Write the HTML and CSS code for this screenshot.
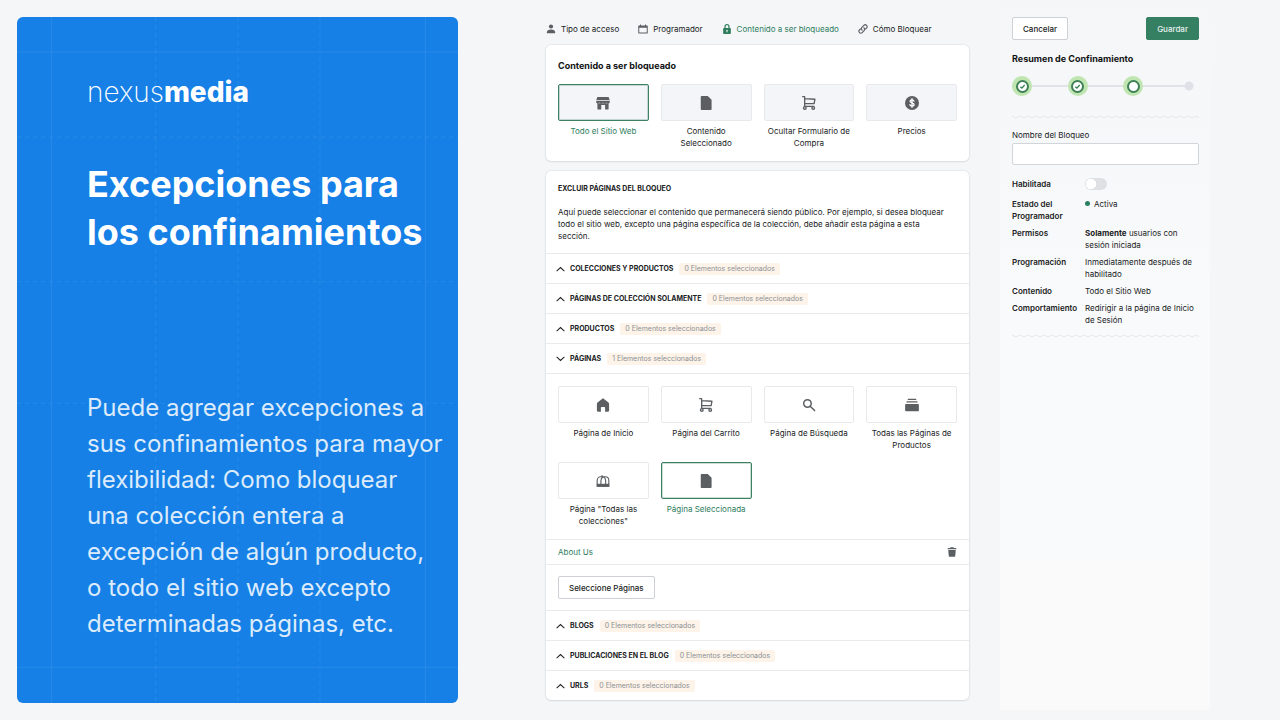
FILE: index.html
```html
<!DOCTYPE html>
<html lang="es">
<head>
<meta charset="utf-8">
<meta name="viewport" content="width=device-width, initial-scale=1">
<title>Excepciones para los confinamientos</title>
<link rel="stylesheet" href="styles.css">
</head>
<body>
<svg class="defs" aria-hidden="true">
  <defs>
    <symbol id="i-person" viewBox="0 0 20 20"><circle cx="10" cy="5" r="4.2"/><path d="M1.500 17.500C1.500 13 5 11 10 11s8.500 2 8.500 6.500c0 .6-.4 1-1 1h-15c-.6 0-1-.4-1-1z"/></symbol>
    <symbol id="i-calendar" viewBox="0 0 20 20"><path fill-rule="evenodd" d="M4 1h2v2h8V1h2v2h2.500c.6 0 1 .4 1 1v14c0 .6-.4 1-1 1h-17c-.6 0-1-.4-1-1V4c0-.6.4-1 1-1H4V1zM2.500 7.500V17h15V7.500h-15z"/></symbol>
    <symbol id="i-lock" viewBox="0 0 20 20"><path fill-rule="evenodd" d="M10 0C7 0 4.800 2.300 4.800 5v3H4c-1 0-1.700.7-1.700 1.700v8.600c0 1 .7 1.700 1.700 1.700h12c1 0 1.700-.7 1.700-1.700V9.700c0-1-.7-1.700-1.700-1.700h-.8V5c0-2.700-2.200-5-5.200-5zm-2.700 8V5c0-1.500 1.100-2.600 2.700-2.600s2.700 1.100 2.700 2.600v3H7.300zM10 11.300a1.700 1.700 0 0 1 1 3v2.400H9v-2.400a1.700 1.700 0 0 1 1-3z"/></symbol>
    <symbol id="i-link" viewBox="0 0 20 20"><g fill="none" stroke="currentColor" stroke-width="2.200" stroke-linecap="round"><path d="M8.500 12.500c-2.200-1.600-2.300-4.200-.8-5.700l4-4c1.600-1.600 4-1.500 5.400-.1s1.500 3.700 0 5.300l-2 2"/><path d="M11.500 7.500c2.200 1.600 2.300 4.200.8 5.700l-4 4c-1.600 1.600-4 1.500-5.400.1s-1.500-3.700 0-5.300l2-2"/></g></symbol>
    <symbol id="i-store" viewBox="0 0 20 20"><path d="M2.500 1.500h15c.4 0 .7.2.8.600L19.700 6H.3l1.400-3.900c.1-.4.400-.6.8-.6z"/><path d="M.3 7h19.400v1.500c0 1.300-.9 2.200-2.200 2.200-1 0-1.900-.5-2.500-1.300-.6.800-1.500 1.300-2.500 1.300s-1.900-.5-2.500-1.300c-.6.800-1.500 1.300-2.500 1.300S5.600 10.200 5 9.400c-.6.800-1.500 1.300-2.500 1.300C1.200 10.700.3 9.800.3 8.500z"/><path d="M2 10.500h16v8.200c0 .3-.3.600-.6.600H13V13H7.500v6.300H2.600c-.3 0-.6-.3-.6-.6z"/></symbol>
    <symbol id="i-page" viewBox="0 0 20 20"><path d="M4 0h8.500L18 5.500V18.500c0 .8-.7 1.500-1.500 1.500H4c-.8 0-1.500-.7-1.500-1.500v-17C2.500.7 3.200 0 4 0z"/></symbol>
    <symbol id="i-cart" viewBox="0 0 20 20"><g fill="none" stroke="currentColor" stroke-width="1.900" stroke-linecap="round" stroke-linejoin="round"><path d="M1 1h2.800v13.700h13M4 3.800l14.500.8-1.200 6.400H4"/><circle cx="4" cy="17" r="1.900"/><circle cx="16" cy="17" r="1.900"/></g></symbol>
    <symbol id="i-dollar" viewBox="0 0 20 20"><circle cx="10" cy="10" r="10"/><path d="M12.800 7.300C12.400 6 11.400 5.500 10 5.500c-1.600 0-2.700.8-2.700 2.100 0 3.100 5.600 1.500 5.600 4.700 0 1.400-1.200 2.200-2.900 2.200-1.600 0-2.700-.7-3-2.100M10 3.800v12.400" fill="none" stroke="#fff" stroke-width="1.900" stroke-linecap="round"/></symbol>
    <symbol id="i-home" viewBox="0 0 20 20"><path d="M10 .8c.5 0 1 .2 1.400.5l6 4.900c.8.600 1.300 1.500 1.300 2.500V18c0 .8-.6 1.500-1.500 1.500H13V14c0-.7-.5-1.200-1.200-1.200H8.200c-.7 0-1.200.5-1.200 1.200v5.500H2.800c-.9 0-1.500-.7-1.500-1.500V8.700c0-1 .5-1.900 1.300-2.500l6-4.900c.4-.3.900-.5 1.400-.5z"/></symbol>
    <symbol id="i-search" viewBox="0 0 20 20"><g fill="none" stroke="currentColor" stroke-width="2.100" stroke-linecap="round"><circle cx="7.800" cy="7.800" r="5.400"/><path d="M12 12l6 6"/></g></symbol>
    <symbol id="i-stack" viewBox="0 0 20 20"><path d="M4.500 1h11l1 1.800h-13zM2.700 4.700h14.600l1 1.800H1.700zM1.500 8.500h17c.8 0 1.300.6 1.300 1.300v8c0 .8-.6 1.200-1.300 1.200h-17C.7 19 .2 18.500.2 17.800v-8c0-.7.5-1.300 1.300-1.300z"/></symbol>
    <symbol id="i-collection" viewBox="0 0 20 20"><path d="M.8 14h18.400v4.500H.8z"/><path d="M1.700 15V9.500c0-3 2-5.500 5-5.500h6.600c3 0 5 2.500 5 5.500V15M7 15V9.500C7 6.500 8.500 5 10.300 4c2 1 3.500 2.500 3.500 5.500V15M10.300 4 8 2" fill="none" stroke="currentColor" stroke-width="1.600"/></symbol>
    <symbol id="i-trash" viewBox="0 0 20 20"><path d="M7 .5h6l1 1.500h4.500v2.500h-17V2H6zM2.500 6h15l-1 12c-.1.800-.6 1.300-1.400 1.300H4.900c-.8 0-1.300-.5-1.400-1.300z"/></symbol>
    <symbol id="i-up" viewBox="0 0 10 6"><path d="M1 5l4-3.600L9 5" fill="none" stroke="currentColor" stroke-width="1.200" stroke-linecap="round"/></symbol>
    <symbol id="i-down" viewBox="0 0 10 6"><path d="M1 1l4 3.600L9 1" fill="none" stroke="currentColor" stroke-width="1.200" stroke-linecap="round"/></symbol>
    <symbol id="i-check" viewBox="0 0 10 10"><path d="M2.600 5.200l1.700 1.600 3.100-3.400" fill="none" stroke="currentColor" stroke-width="1.500"/></symbol>
    <pattern id="wave" width="8" height="4" patternUnits="userSpaceOnUse"><path d="M-1 1.500C1 .5 3 3 4 3s3-2.500 5-1.500" fill="none" stroke="#e3e5e8" stroke-width="1"/></pattern>
  </defs>
</svg>
<div class="page">
  <section class="promo">
    <svg class="promo-grid" aria-hidden="true">
      <g class="solid"><line x1="7.8%" x2="7.8%" y1="0" y2="100%"/><line x1="92.600%" x2="92.600%" y1="0" y2="100%"/><line x1="0" x2="100%" y1="5.100%" y2="5.100%"/><line x1="0" x2="100%" y1="94.800%" y2="94.800%"/></g>
      <g class="dashed"><line x1="31.400%" x2="31.400%" y1="0" y2="100%"/><line x1="50.100%" x2="50.100%" y1="0" y2="100%"/><line x1="68.700%" x2="68.700%" y1="0" y2="100%"/><line x1="0" x2="100%" y1="17.500%" y2="17.500%"/><line x1="0" x2="100%" y1="38.600%" y2="38.600%"/><line x1="0" x2="100%" y1="56.300%" y2="56.300%"/></g>
    </svg>
    <div class="brand">nexus<b>media</b></div>
    <h1>Excepciones para<br>los confinamientos</h1>
    <p>Puede agregar excepciones a<br>sus confinamientos para mayor<br>flexibilidad: Como bloquear<br>una colección entera a<br>excepción de algún producto,<br>o todo el sitio web excepto<br>determinadas páginas, etc.</p>
  </section>

  <main class="editor">
    <nav class="tabs">
      <a href="#acceso"><svg class="tab-icon"><use href="#i-person"/></svg>Tipo de acceso</a>
      <a href="#programador"><svg class="tab-icon"><use href="#i-calendar"/></svg>Programador</a>
      <a href="#contenido" class="current"><svg class="tab-icon"><use href="#i-lock"/></svg>Contenido a ser bloqueado</a>
      <a href="#bloquear"><svg class="tab-icon"><use href="#i-link"/></svg>Cómo Bloquear</a>
    </nav>

    <section class="card content-card">
      <h2>Contenido a ser bloqueado</h2>
      <div class="tiles">
        <button class="tile tinted selected"><span class="box"><svg><use href="#i-store"/></svg></span>Todo el Sitio Web</button>
        <button class="tile tinted"><span class="box"><svg><use href="#i-page"/></svg></span>Contenido<br>Seleccionado</button>
        <button class="tile tinted"><span class="box"><svg><use href="#i-cart"/></svg></span>Ocultar Formulario de Compra</button>
        <button class="tile tinted"><span class="box"><svg><use href="#i-dollar"/></svg></span>Precios</button>
      </div>
    </section>

    <section class="card">
      <div class="intro">
        <h3>EXCLUIR PÁGINAS DEL BLOQUEO</h3>
        <p>Aquí puede seleccionar el contenido que permanecerá siendo público. Por ejemplo, si desea bloquear todo el sitio web, excepto una página específica de la colección, debe añadir esta página a esta<br>sección.</p>
      </div>
      <button class="fold"><svg><use href="#i-up"/></svg>COLECCIONES Y PRODUCTOS<span class="badge">0 Elementos seleccionados</span></button>
      <button class="fold"><svg><use href="#i-up"/></svg>PÁGINAS DE COLECCIÓN SOLAMENTE<span class="badge">0 Elementos seleccionados</span></button>
      <button class="fold"><svg><use href="#i-up"/></svg>PRODUCTOS<span class="badge">0 Elementos seleccionados</span></button>
      <button class="fold"><svg><use href="#i-down"/></svg>PÁGINAS<span class="badge">1 Elementos seleccionados</span></button>
      <div class="tiles page-tiles">
        <button class="tile"><span class="box"><svg><use href="#i-home"/></svg></span>Página de Inicio</button>
        <button class="tile"><span class="box"><svg><use href="#i-cart"/></svg></span>Página del Carrito</button>
        <button class="tile"><span class="box"><svg><use href="#i-search"/></svg></span>Página de Búsqueda</button>
        <button class="tile"><span class="box"><svg><use href="#i-stack"/></svg></span>Todas las Páginas de Productos</button>
        <button class="tile"><span class="box"><svg><use href="#i-collection"/></svg></span>Página "Todas las colecciones"</button>
        <button class="tile selected"><span class="box"><svg><use href="#i-page"/></svg></span>Página Seleccionada</button>
      </div>
      <div class="picked">
        <a href="#about">About Us</a>
        <button class="remove" aria-label="Eliminar"><svg><use href="#i-trash"/></svg></button>
      </div>
      <div class="pick"><button class="btn">Seleccione Páginas</button></div>
      <button class="fold"><svg><use href="#i-up"/></svg>BLOGS<span class="badge">0 Elementos seleccionados</span></button>
      <button class="fold"><svg><use href="#i-up"/></svg>PUBLICACIONES EN EL BLOG<span class="badge">0 Elementos seleccionados</span></button>
      <button class="fold"><svg><use href="#i-up"/></svg>URLS<span class="badge">0 Elementos seleccionados</span></button>
    </section>
  </main>

  <aside class="summary">
    <div class="actions"><button class="btn">Cancelar</button><button class="btn primary">Guardar</button></div>
    <h2>Resumen de Confinamiento</h2>
    <div class="steps">
      <span class="step"><svg><use href="#i-check"/></svg></span><i></i>
      <span class="step"><svg><use href="#i-check"/></svg></span><i></i>
      <span class="step"><svg></svg></span><i></i>
      <span class="step todo"></span>
    </div>
    <svg class="wave" aria-hidden="true"><rect width="100%" height="4" fill="url(#wave)"/></svg>
    <label class="name" for="name">Nombre del Bloqueo</label>
    <input class="field" id="name" type="text">
    <div class="enabled"><label for="enabled">Habilitada</label><input id="enabled" class="switch" type="checkbox" role="switch"></div>
    <dl>
      <dt>Estado del Programador</dt><dd><span class="dot"></span>Activa</dd>
      <dt>Permisos</dt><dd><b>Solamente</b> usuarios con sesión iniciada</dd>
      <dt>Programación</dt><dd>Inmediatamente después de habilitado</dd>
      <dt>Contenido</dt><dd>Todo el Sitio Web</dd>
      <dt>Comportamiento</dt><dd>Redirigir a la página de Inicio de&nbsp;Sesión</dd>
    </dl>
    <svg class="wave" aria-hidden="true"><rect width="100%" height="4" fill="url(#wave)"/></svg>
  </aside>
</div>
</body>
</html>
```
FILE: styles.css
```css
* { box-sizing: border-box; }
body {
  margin: 0;
  background: #f4f6f8;
  color: #202223;
  font: 8px/12px Inter, "Liberation Sans", sans-serif;
}
h1, h2, h3, p, dl, dd { margin: 0; }
a { color: inherit; text-decoration: none; }
button {
  font: inherit;
  color: inherit;
  background: none;
  border: 0;
  padding: 0;
  cursor: pointer;
}
svg { display: block; fill: currentColor; flex: none; }
.defs { position: absolute; width: 0; height: 0; }

.page {
  display: grid;
  grid-template-columns: minmax(0, 529fr) minmax(0, 454fr) minmax(0, 210fr);
  min-height: 100vh;
  padding: 0 70px 0 17px;
}

/* Promo panel */
.promo {
  position: relative;
  margin: 17px 88px 17px 0;
  padding: 59px 0 0 70px;
  border-radius: 6px;
  background: #1680e6;
  color: #fff;
  white-space: nowrap;
}
.promo-grid { position: absolute; inset: 0; width: 100%; height: 100%; }
.promo-grid line { stroke: #3a93ea; stroke-width: 1; opacity: 0.5; }
.promo-grid .dashed line { stroke-dasharray: 4 4; }
.brand, .promo h1, .promo p { position: relative; }
.brand { font-size: 28px; line-height: 32px; font-weight: 200; }
.brand b { font-weight: 800; }
.promo h1 { margin-top: 52px; font-size: 36px; line-height: 48px; font-weight: 700; }
.promo p { margin-top: 134px; font-size: 24px; line-height: 36px; color: #dcebfb; }

/* Editor column */
.editor { margin-right: 31px; padding-bottom: 19px; }
.tabs { display: flex; gap: 19px; padding: 22px 0 10px; white-space: nowrap; }
.tabs a { display: flex; align-items: center; gap: 5px; height: 13px; }
.tab-icon { width: 10px; height: 10px; color: #5c5f62; }
.current, .current .tab-icon { color: #2f7d5d; }

.card {
  border-radius: 5px;
  background: #fff;
  box-shadow: 0 0 2px rgba(23, 24, 24, 0.15), 0 1px 2px rgba(0, 0, 0, 0.08);
}
.card + .card { margin-top: 10px; }
.content-card { padding: 14px 12px 12px; }
h2 { font-size: 9px; line-height: 14px; font-weight: 700; color: #111213; }
h3 { font-size: 7px; line-height: 12px; font-weight: 700; }

.tiles { display: grid; grid-template-columns: repeat(4, 1fr); gap: 11px 12px; }
.content-card .tiles { margin-top: 11px; }
.tile { display: flex; flex-direction: column; align-items: center; }
.box {
  display: flex;
  align-items: center;
  justify-content: center;
  width: 100%;
  height: 37px;
  margin-bottom: 4px;
  border: 1px solid #e7e9eb;
  border-radius: 2px;
  color: #5c5f62;
}
.box svg { width: 14px; height: 14px; }
.tinted .box { background: #f4f5f8; }
.selected { color: #2f7d5d; }
.selected .box { border-color: #3d8064; box-shadow: inset 0 0 0 1px rgba(47, 125, 93, 0.25); }

.intro { padding: 12px 12px 11px; }
.intro p { margin-top: 11px; }
.fold {
  display: flex;
  align-items: center;
  width: 100%;
  height: 30px;
  padding-left: 10px;
  border-top: 1px solid #e8ebed;
  font-size: 7px;
  font-weight: 700;
}
.fold svg { width: 9px; height: 6px; margin-right: 5px; }
.badge {
  margin-left: 6px;
  padding: 0 5px;
  border-radius: 2px;
  background: #fdf3e8;
  color: #8c9196;
  font-weight: 400;
}
.page-tiles { padding: 12px; border-top: 1px solid #e8ebed; }
.picked {
  display: flex;
  align-items: center;
  justify-content: space-between;
  height: 25px;
  padding: 0 12px;
  border-top: 1px solid #e8ebed;
  color: #2f7d5d;
}
.remove { color: #5c5f62; }
.remove svg { width: 10px; height: 10px; }
.pick { padding: 11px 12px; border-top: 1px solid #e8ebed; }
.btn {
  height: 23px;
  padding: 0 10px;
  border: 1px solid #cdd0d4;
  border-radius: 2px;
  background: #fff;
  font-weight: 500;
}
.pick .btn { display: block; }
.primary { background: #357f62; border-color: #357f62; color: #e9f3ee; }

/* Summary column */
.summary {
  margin-bottom: 10px;
  padding: 17px 11px 0 12px;
  background: linear-gradient(#f4f6f8, #f9fafb 320px, #fafafb);
}
.actions { display: flex; justify-content: space-between; margin-bottom: 12px; }
.steps { display: flex; align-items: center; margin: 10px 0 19px; }
.steps i { flex: 1; height: 2px; background: #e1e3e8; }
.step {
  display: flex;
  align-items: center;
  justify-content: center;
  width: 20px;
  height: 20px;
  border-radius: 50%;
  background: #bfe5b0;
  color: #2f7d4d;
}
.step svg { width: 13px; height: 13px; border: 2px solid #3f8057; border-radius: 50%; background: #fff; }
.todo {
  background:
    radial-gradient(circle, #dfe0e8 4px, transparent 5px),
    linear-gradient(#e1e3e8, #e1e3e8) left center / 10px 2px no-repeat;
}
.wave { width: 100%; height: 4px; }
.name { display: block; margin: 10px 0 2px; }
.field {
  display: block;
  width: 100%;
  height: 22px;
  border: 1px solid #d2d5d9;
  border-radius: 2px;
  background: #fff;
  padding: 0 6px;
  font: inherit;
}
.enabled {
  display: grid;
  grid-template-columns: 73px 1fr;
  align-items: center;
  margin: 13px 0 8px;
  font-weight: 600;
}
.switch {
  appearance: none;
  width: 22px;
  height: 12px;
  margin: 0;
  border-radius: 6px;
  background: radial-gradient(circle at 6px 6px, #fff 5px, #c6c8cb 6px, transparent 6px), #dfe0e3;
}
dl { display: grid; grid-template-columns: 68px 1fr; gap: 5px; margin-bottom: 8px; }
dt { font-weight: 600; }
.dot {
  display: inline-block;
  width: 5px;
  height: 5px;
  margin-right: 4px;
  border-radius: 50%;
  background: #2a8060;
  vertical-align: 1px;
}
```
